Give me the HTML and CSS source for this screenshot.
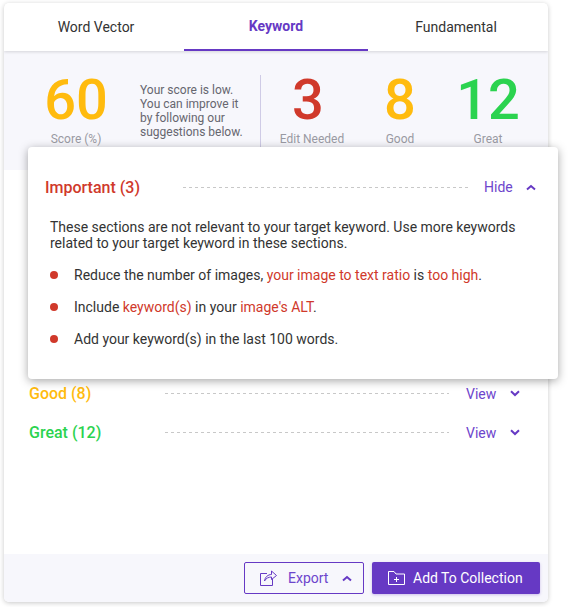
FILE: index.html
```html
<!DOCTYPE html>
<html lang="en">
<head>
<meta charset="utf-8">
<title>Keyword</title>
<link rel="stylesheet" href="styles.css">
</head>
<body>
<div class="card">
  <nav class="tabs">
    <div class="tab first">Word Vector</div>
    <div class="tab active">Keyword</div>
    <div class="tab last">Fundamental</div>
  </nav>
  <section class="stats">
    <div class="stat score"><div class="num amber">60</div><div class="lbl">Score (%)</div></div>
    <p class="desc">Your score is low. You can improve it by following our suggestions below.</p>
    <div class="stat edit"><div class="num red">3</div><div class="lbl">Edit Needed</div></div>
    <div class="stat good"><div class="num amber">8</div><div class="lbl">Good</div></div>
    <div class="stat great"><div class="num green">12</div><div class="lbl">Great</div></div>
  </section>
  <section class="list">
    <div class="row"><span class="row-title amber">Good (8)</span><span class="dash"></span><span class="action">View</span><svg class="chev" viewBox="0 0 10 7"><path d="M1 1.200 5 5l4-3.800"/></svg></div>
    <div class="row"><span class="row-title green">Great (12)</span><span class="dash"></span><span class="action">View</span><svg class="chev" viewBox="0 0 10 7"><path d="M1 1.200 5 5l4-3.800"/></svg></div>
  </section>
  <footer class="foot">
    <button class="btn outline">
      <svg class="ico-export" viewBox="0 0 17 16"><path d="M7 3.500H.5v12h12V9"/><path d="M4.500 11C5 7 8 4.500 11.500 4.500V1L16.500 5.500 11.500 9.500V7C9 7 6 8 4.500 11Z"/></svg>
      <span class="export-label">Export</span>
      <svg class="chev up" viewBox="0 0 10 7"><path d="M1 5.500 5 2l4 3.500"/></svg>
    </button>
    <button class="btn solid">
      <svg class="ico-folder" viewBox="0 0 17 14"><path d="M.5.500h5.500l2 2.500h8.500v10.500H.5Z"/><path d="M8.500 6v5M6 8.500h5"/></svg>
      <span>Add To Collection</span>
    </button>
  </footer>
</div>
<aside class="popup">
  <div class="pop-head"><span class="pop-title">Important (3)</span><span class="dash"></span><span class="action">Hide</span><svg class="chev" viewBox="0 0 10 7"><path d="M1 5.500 5 2l4 3.500"/></svg></div>
  <p class="intro">These sections are not relevant to your target keyword. Use more keywords related to your target keyword in these sections.</p>
  <ul class="items">
    <li>Reduce the number of images, <em>your image to text ratio</em> is <em>too high</em>.</li>
    <li>Include <em>keyword(s)</em> in your <em>image's ALT</em>.</li>
    <li>Add your keyword(s) in the last 100 words.</li>
  </ul>
</aside>
</body>
</html>
```
FILE: styles.css
```css
* { box-sizing: border-box; }
html, body { margin: 0; height: 607px; overflow: hidden; }
body { position: relative; background: #fff; font-family: Roboto, "Liberation Sans", sans-serif; color: #333; }
.card { margin: 3px 0 0 4px; width: 544px; height: 599px; background: #fff; border-radius: 5px; box-shadow: 0 1px 5px rgba(0,0,0,.22); display: flex; flex-direction: column; overflow: hidden; }
.tabs { display: grid; grid-template-columns: 180px 184px 180px; height: 48px; flex: none; position: relative; box-shadow: 0 1px 3px rgba(0,0,0,.14); z-index: 1; background: #fff; }
.tab { display: flex; align-items: center; justify-content: center; font-size: 14px; color: #333; height: 48px; }
.tab.first { padding-left: 4px; }
.tab.last { padding-right: 4px; }
.tab.active { color: #6639c4; font-weight: 700; border-bottom: 2px solid #6639c4; }
.stats { flex: none; height: 119px; background: #f7f7fc; display: flex; align-items: flex-start; padding-top: 20px; }
.stat { display: flex; flex-direction: column; align-items: center; }
.num { font-size: 56px; line-height: 58px; font-weight: 500; }
.lbl { font-size: 12px; line-height: 14px; color: #9a9aa3; margin-top: 3px; }
.score { width: 60px; margin-left: 42px; }
.desc { margin: 12px 0 0 34px; width: 112px; font-size: 12px; line-height: 14px; color: #66666f; }
.edit { width: 80px; margin-left: 16px; position: relative; }
.edit .lbl { position: relative; left: 4px; }
.edit::before { content: ""; position: absolute; left: -8px; top: 4px; width: 1px; height: 90px; background: #cfcbe6; }
.good { width: 60px; margin-left: 22px; }
.great { width: 60px; margin-left: 28px; }
.amber { color: #ffbb0e; }
.red { color: #d0392b; }
.green { color: #2bd34f; }
.list { flex: 1; padding: 204px 0 0 25px; }
.row { display: flex; align-items: center; height: 39px; }
.row-title { width: 136px; font-size: 16px; font-weight: 500; }
.dash { flex: none; height: 1px; background: repeating-linear-gradient(90deg, #c8c8c8 0 3px, transparent 3px 6px); }
.row .dash { width: 284px; }
.action { font-size: 14px; color: #6d45cc; }
.row .action { margin-left: 17px; width: 44px; }
.chev { width: 10px; height: 7px; fill: none; stroke: #6639c4; stroke-width: 2; }
.foot { flex: none; height: 48px; background: #f7f7fc; display: flex; justify-content: flex-end; gap: 8px; padding: 8px 8px 8px 0; }
.btn { height: 32px; border-radius: 2px; font: 14px Roboto, sans-serif; display: flex; align-items: center; padding: 0; cursor: pointer; }
.outline { width: 120px; background: transparent; border: 1px solid #6639c4; color: #6d45cc; padding-left: 15px; }
.ico-export { width: 17px; height: 16px; fill: none; stroke: #6639c4; stroke-width: 1; }
.export-label { margin: 0 14px 0 11px; }
.solid { width: 168px; background: #6639c4; border: 0; color: #fff; padding-left: 16px; box-shadow: 0 1px 3px rgba(102,57,196,.3); }
.ico-folder { width: 17px; height: 14px; margin-right: 8px; fill: none; stroke: #fff; stroke-width: 1; }
.popup { position: absolute; left: 28px; top: 147px; width: 530px; height: 232px; background: #fff; border-radius: 4px; box-shadow: 0 2px 10px rgba(0,0,0,.35); padding: 16px 20px 0 17px; }
.pop-head { display: flex; align-items: center; height: 48px; margin-bottom: 8px; }
.pop-title { width: 138px; font-size: 16px; font-weight: 500; color: #d0392b; }
.pop-head .dash { width: 285px; }
.pop-head .action { margin-left: 16px; width: 42px; }
.intro { margin: 0 0 0 5px; font-size: 14px; line-height: 16px; color: #333; width: 490px; }
.items { list-style: none; margin: 8px 0 0 5px; padding: 0; }
.items li { position: relative; font-size: 14px; line-height: 32px; padding-left: 24px; color: #333; }
.items li::before { content: ""; position: absolute; left: 0; top: 12px; width: 8px; height: 8px; border-radius: 50%; background: #d0392b; }
.items em { font-style: normal; color: #d0392b; }
```
